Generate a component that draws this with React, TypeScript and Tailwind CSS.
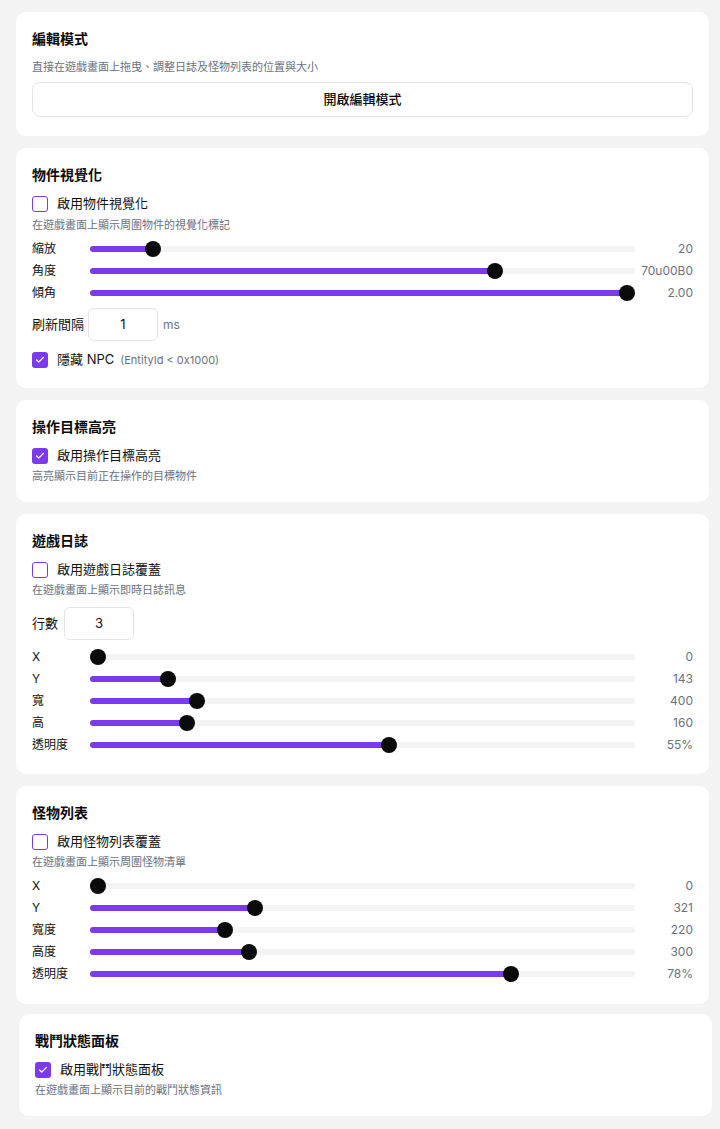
import React from "react";

const font = { fontFamily: '"Inter", "Noto Sans CJK TC", "Noto Sans", sans-serif' };

function Check({ checked }: { checked: boolean }) {
  return checked ? (
    <div className="w-4 h-4 rounded-[3px] bg-[#7c3aed] flex items-center justify-center shrink-0">
      <svg width="10" height="10" viewBox="0 0 24 24" fill="none" stroke="white" strokeWidth="3" strokeLinecap="round" strokeLinejoin="round">
        <path d="M20 6 9 17l-5-5" />
      </svg>
    </div>
  ) : (
    <div className="w-4 h-4 rounded-[3px] border border-[#7c3aed] bg-white shrink-0" />
  );
}

function CheckRow({ checked, label, extra }: { checked: boolean; label: string; extra?: string }) {
  return (
    <div className="flex items-center h-5 mt-[9px]">
      <Check checked={checked} />
      <span className="ml-[9px] text-[13px] text-[#111]">{label}</span>
      {extra && <span className="ml-[6px] text-[11px] text-[#6b7280]">{extra}</span>}
    </div>
  );
}

function Desc({ children, className = "mt-[2px]" }: { children: React.ReactNode; className?: string }) {
  return <div className={`text-[11px] leading-4 text-[#6b7280] ${className}`}>{children}</div>;
}

function Title({ children }: { children: React.ReactNode }) {
  return <div className="text-sm leading-5 font-bold text-[#0a0a0a] pt-[1px]">{children}</div>;
}

function Slider({ label, value, pct }: { label: string; value: string; pct: number }) {
  return (
    <div className="flex items-center h-[22px]">
      <div className="w-[58px] text-[12px] text-[#111] shrink-0">{label}</div>
      <div className="relative flex-1 h-[6px] rounded-full bg-[#f3f3f3]">
        <div
          className="absolute left-0 top-0 h-[6px] rounded-full bg-[#7c3aed]"
          style={{ width: `calc(8px + ${pct} * (100% - 16px))` }}
        />
        <div
          className="absolute top-1/2 -translate-y-1/2 w-4 h-4 rounded-full bg-[#0a0a0a]"
          style={{ left: `calc(${pct} * (100% - 16px))` }}
        />
      </div>
      <div className="w-[50px] ml-2 flex justify-end whitespace-nowrap text-[12px] text-[#6b7280] shrink-0">
        <span>{value}</span>
      </div>
    </div>
  );
}

function Card({ children, className = "" }: { children: React.ReactNode; className?: string }) {
  return <div className={`bg-white rounded-[10px] px-4 pt-4 ${className}`}>{children}</div>;
}

function NumInput({ value }: { value: string }) {
  return (
    <div className="w-[70px] h-[33px] border border-[#e5e5e5] rounded-md flex items-center justify-center text-[13px] text-[#111]">
      {value}
    </div>
  );
}

export default function App() {
  return (
    <div className="min-h-[1129px] bg-[#f3f3f3] pt-3 pl-4 pr-[11px] pb-3" style={font}>
      <div className="flex flex-col gap-3">
        <Card className="pb-[19px]">
          <Title>編輯模式</Title>
          <Desc className="mt-[10px]">直接在遊戲畫面上拖曳、調整日誌及怪物列表的位置與大小</Desc>
          <div className="mt-[7px] h-[35px] border border-[#e5e5e5] rounded-lg flex items-center justify-center text-[13px] font-medium text-[#0a0a0a]">
            開啟編輯模式
          </div>
        </Card>

        <Card className="pb-[18px]">
          <Title>物件視覺化</Title>
          <CheckRow checked={false} label="啟用物件視覺化" />
          <Desc className="mt-[3px]">在遊戲畫面上顯示周圍物件的視覺化標記</Desc>
          <div className="mt-[5px]">
            <Slider label="縮放" value="20" pct={0.104} />
            <Slider label="角度" value="70u00B0" pct={0.75} />
            <Slider label="傾角" value="2.00" pct={1} />
          </div>
          <div className="flex items-center mt-1">
            <span className="text-[13px] text-[#111] w-[56px]">刷新間隔</span>
            <NumInput value="1" />
            <span className="ml-[5px] text-[12px] text-[#6b7280]">ms</span>
          </div>
          <CheckRow checked={true} label="隱藏 NPC" extra="(EntityId < 0x1000)" />
        </Card>

        <Card className="pb-[18px]">
          <Title>操作目標高亮</Title>
          <CheckRow checked={true} label="啟用操作目標高亮" />
          <Desc>高亮顯示目前正在操作的目標物件</Desc>
        </Card>

        <Card className="pb-[18px]">
          <Title>遊戲日誌</Title>
          <CheckRow checked={false} label="啟用遊戲日誌覆蓋" />
          <Desc>在遊戲畫面上顯示即時日誌訊息</Desc>
          <div className="flex items-center mt-[9px]">
            <span className="text-[13px] text-[#111] w-[32px]">行數</span>
            <NumInput value="3" />
          </div>
          <div className="mt-[6px]">
            <Slider label="X" value="0" pct={0} />
            <Slider label="Y" value="143" pct={0.132} />
            <Slider label="寬" value="400" pct={0.187} />
            <Slider label="高" value="160" pct={0.168} />
            <Slider label="透明度" value="55%" pct={0.55} />
          </div>
        </Card>

        <Card className="pb-[19px]">
          <Title>怪物列表</Title>
          <CheckRow checked={false} label="啟用怪物列表覆蓋" />
          <Desc>在遊戲畫面上顯示周圍怪物清單</Desc>
          <div className="mt-[5px]">
            <Slider label="X" value="0" pct={0} />
            <Slider label="Y" value="321" pct={0.297} />
            <Slider label="寬度" value="220" pct={0.24} />
            <Slider label="高度" value="300" pct={0.285} />
            <Slider label="透明度" value="78%" pct={0.78} />
          </div>
        </Card>
      </div>
      <Card className="mt-[10px] ml-[3px] -mr-[3px] pb-[18px]">
        <Title>戰鬥狀態面板</Title>
        <CheckRow checked={true} label="啟用戰鬥狀態面板" />
        <Desc>在遊戲畫面上顯示目前的戰鬥狀態資訊</Desc>
      </Card>
    </div>
  );
}
